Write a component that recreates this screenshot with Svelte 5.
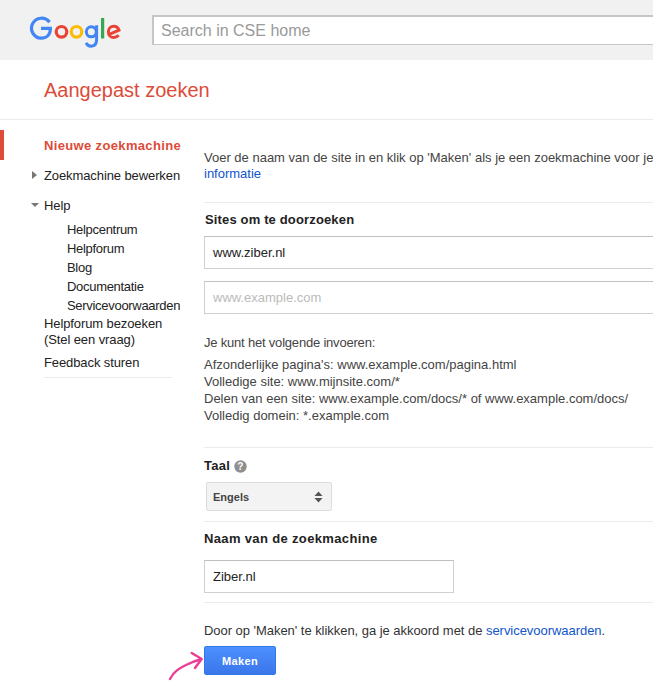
<script>
    const helpLinks = ['Helpcentrum', 'Helpforum', 'Blog', 'Documentatie', 'Servicevoorwaarden'];
    const examples = [
        ["Afzonderlijke pagina's:", 'www.example.com/pagina.html'],
        ['Volledige site:', 'www.mijnsite.com/*'],
        ['Delen van een site:', 'www.example.com/docs/* of www.example.com/docs/'],
        ['Volledig domein:', '*.example.com']
    ];
</script>

<div class="page">
    <header class="top">
        <svg class="logo" width="92" height="32" viewBox="0 0 92 32" fill="none" role="img" aria-label="Google">
            <path d="M20.5 6.2A10 10 0 1 0 12 22.2c5.6 0 9.4-3.6 9.4-9.8H12" stroke="#4285f4" stroke-width="3.2"/>
            <circle cx="32.5" cy="15.8" r="5.3" stroke="#ea4335" stroke-width="3.2"/>
            <circle cx="47.5" cy="15.8" r="5.3" stroke="#fbbc05" stroke-width="3.2"/>
            <circle cx="62.3" cy="15.8" r="5" stroke="#4285f4" stroke-width="3"/>
            <path d="M67.6 9.2v14.4c0 4.6-2.4 6.6-5.4 6.6-2.4 0-4.3-1.5-5-3.5" stroke="#4285f4" stroke-width="3"/>
            <path d="M73.6 2v20.5" stroke="#34a853" stroke-width="3.2"/>
            <path d="M79 18.8l11-4.6c-.8-2.5-2.8-4-5.2-4-3 0-5.4 2.4-5.4 5.7s2.4 5.7 5.5 5.7c2 0 3.6-.9 4.7-2.4" stroke="#ea4335" stroke-width="3"/>
        </svg>
        <div class="search">Search in CSE home</div>
    </header>

    <h1 class="title">Aangepast zoeken</h1>

    <div class="body">
        <nav class="side">
            <div class="nav-item current">Nieuwe zoekmachine</div>
            <div class="nav-item tree"><i class="arrow right"></i>Zoekmachine bewerken</div>
            <div class="nav-item tree help"><i class="arrow down"></i>Help</div>
            <ul class="sub">
                {#each helpLinks as link}
                    <li>{link}</li>
                {/each}
            </ul>
            <div class="nav-plain">Helpforum bezoeken<br />(Stel een vraag)</div>
            <div class="nav-plain feedback">Feedback sturen</div>
        </nav>

        <main class="content">
            <p class="intro">Voer de naam van de site in en klik op 'Maken' als je een zoekmachine voor je site wilt maken. <a href="#top">Meer<br /></a><a href="#top">informatie</a></p>

            <section class="block sites">
                <h2>Sites om te doorzoeken</h2>
                <div class="field wide">www.ziber.nl</div>
                <div class="field wide empty">www.example.com</div>
                <p class="hint">Je kunt het volgende invoeren:</p>
                <div class="examples">
                    {#each examples as row}
                        <div>{row[0]} {row[1]}</div>
                    {/each}
                </div>
            </section>

            <section class="block taal">
                <h2>Taal
                    <svg class="q" width="13" height="13" viewBox="0 0 13 13">
                        <circle cx="6.5" cy="6.5" r="6.2" fill="#8f8f8f"/>
                        <text x="6.5" y="10" text-anchor="middle" class="q-mark">?</text>
                    </svg>
                </h2>
                <div class="select">
                    Engels
                    <svg width="9" height="12" viewBox="0 0 9 12"><path d="M4.5 0.5L8.5 5H0.5zM0.5 7H8.5L4.5 11.5z" fill="#555"/></svg>
                </div>
            </section>

            <section class="block naam">
                <h2>Naam van de zoekmachine</h2>
                <div class="field short">Ziber.nl</div>
            </section>

            <section class="block terms">
                <p>Door op 'Maken' te klikken, ga je akkoord met de <a href="#top">servicevoorwaarden</a>.</p>
                <div class="action">
                    <svg class="pointer" width="36" height="32" viewBox="0 0 36 32" fill="none">
                        <path d="M2 29C6 21 12 18 18 15C23 12.500 28 10.500 33.700 9M23.700 3L33.700 9L27 18" stroke="#ec3c96" stroke-width="2.4" stroke-linecap="round" stroke-linejoin="round"/>
                    </svg>
                    <button type="button">Maken</button>
                </div>
            </section>
        </main>
    </div>
</div>

<style>
:global(body) {
    margin: 0;
    background: #fff;
    overflow: hidden;
}
.page {
    width: 653px;
    height: 685px;
    overflow: hidden;
    font-family: "Liberation Sans", Arial, sans-serif;
    font-size: 13px;
    color: #222;
}
.top {
    height: 60px;
    background: #f1f1f1;
    display: flex;
    align-items: center;
    padding-left: 29px;
    box-sizing: border-box;
}
.logo {
    flex: none;
    margin-right: 31px;
    margin-top: 3px;
}
.search {
    flex: none;
    width: 600px;
    height: 30px;
    box-sizing: border-box;
    border: 1px solid #c6c6c6;
    border-width: 2px 1px 1px 2px;
    background: #fff;
    color: #999;
    font-size: 16px;
    line-height: 27px;
    padding-left: 7px;
}
.title {
    margin: 0;
    height: 59px;
    line-height: 60px;
    padding-left: 44px;
    font-size: 20px;
    font-weight: normal;
    color: #dd4b39;
    border-bottom: 1px solid #ebebeb;
}
.body {
    display: flex;
    padding-top: 10px;
}
.side {
    flex: none;
    width: 204px;
    box-sizing: border-box;
}
.nav-item {
    padding-left: 44px;
    height: 30px;
    line-height: 31px;
    position: relative;
    letter-spacing: -0.1px;
}
.current {
    font-weight: bold;
    color: #dd4b39;
    border-left: 4px solid #dd4b39;
    padding-left: 40px;
    letter-spacing: 0.35px;
}
.arrow {
    position: absolute;
    width: 0;
    height: 0;
}
.arrow.right {
    left: 32px;
    top: 11px;
    border-left: 5px solid #777;
    border-top: 4px solid transparent;
    border-bottom: 4px solid transparent;
}
.arrow.down {
    left: 31px;
    top: 13px;
    border-top: 4px solid #777;
    border-left: 4px solid transparent;
    border-right: 4px solid transparent;
}
.sub {
    list-style: none;
    margin: 0;
    padding: 0 0 0 67px;
    letter-spacing: -0.3px;
}
.sub li {
    height: 19px;
    line-height: 19px;
}
.nav-plain {
    padding-left: 44px;
    line-height: 16px;
    margin-top: 1px;
    letter-spacing: -0.1px;
}
.nav-plain.feedback {
    margin: 7px 0 0 44px;
    padding: 0 0 6px;
    width: 128px;
    border-bottom: 1px solid #ebebeb;
}
.content {
    flex: none;
    width: 600px;
}
.intro {
    margin: 20px 0 0;
    line-height: 16px;
    width: 470px;
    white-space: nowrap;
    height: 52px;
    color: #444;
}
a {
    color: #15c;
    text-decoration: none;
}
.block {
    border-top: 1px solid #ebebeb;
}
h2 {
    margin: 0;
    font-size: 13px;
    font-weight: bold;
    color: #222;
    line-height: 16px;
}
.sites h2 {
    padding: 9px 0 0 1px;
    letter-spacing: 0.15px;
}
.field {
    box-sizing: border-box;
    border: 1px solid #d0d0d0;
    border-top-color: #c0c0c0;
    height: 33px;
    line-height: 31px;
    padding-left: 8px;
    color: #222;
}
.wide {
    width: 600px;
    margin-top: 8px;
}
.wide.empty {
    margin-top: 12px;
    color: #bbb;
}
.hint {
    margin: 21px 0 0;
    line-height: 16px;
    letter-spacing: -0.2px;
    color: #444;
}
.examples {
    margin-top: 5px;
    line-height: 17px;
    color: #444;
    height: 91px;
}
.taal h2 {
    padding-top: 10px;
    display: flex;
    align-items: center;
    gap: 4px;
    letter-spacing: 0.3px;
}
.q-mark {
    fill: #fff;
    font-size: 10px;
    font-weight: bold;
}
.select {
    width: 126px;
    height: 29px;
    box-sizing: border-box;
    margin: 8px 0 10px 2px;
    padding: 0 8px 0 6px;
    display: flex;
    align-items: center;
    justify-content: space-between;
    font-size: 11px;
    font-weight: bold;
    color: #444;
    background: #f3f3f3;
    border: 1px solid #dcdcdc;
    border-radius: 2px;
}
.naam h2 {
    padding-top: 9px;
    letter-spacing: 0.35px;
}
.short {
    width: 250px;
    margin: 13px 0 9px;
}
.terms p {
    margin: 20px 0 0;
    line-height: 16px;
    letter-spacing: -0.04px;
    color: #333;
}
.action {
    position: relative;
    margin-top: 7px;
}
.pointer {
    position: absolute;
    left: -36px;
    top: 4px;
}
button {
    display: block;
    width: 72px;
    height: 29px;
    padding: 0;
    font: bold 11px "Liberation Sans", Arial, sans-serif;
    letter-spacing: 0.4px;
    color: #fff;
    background: linear-gradient(#4d90fe, #3a76ea);
    border: 1px solid #3079ed;
    border-radius: 2px;
}
</style>
